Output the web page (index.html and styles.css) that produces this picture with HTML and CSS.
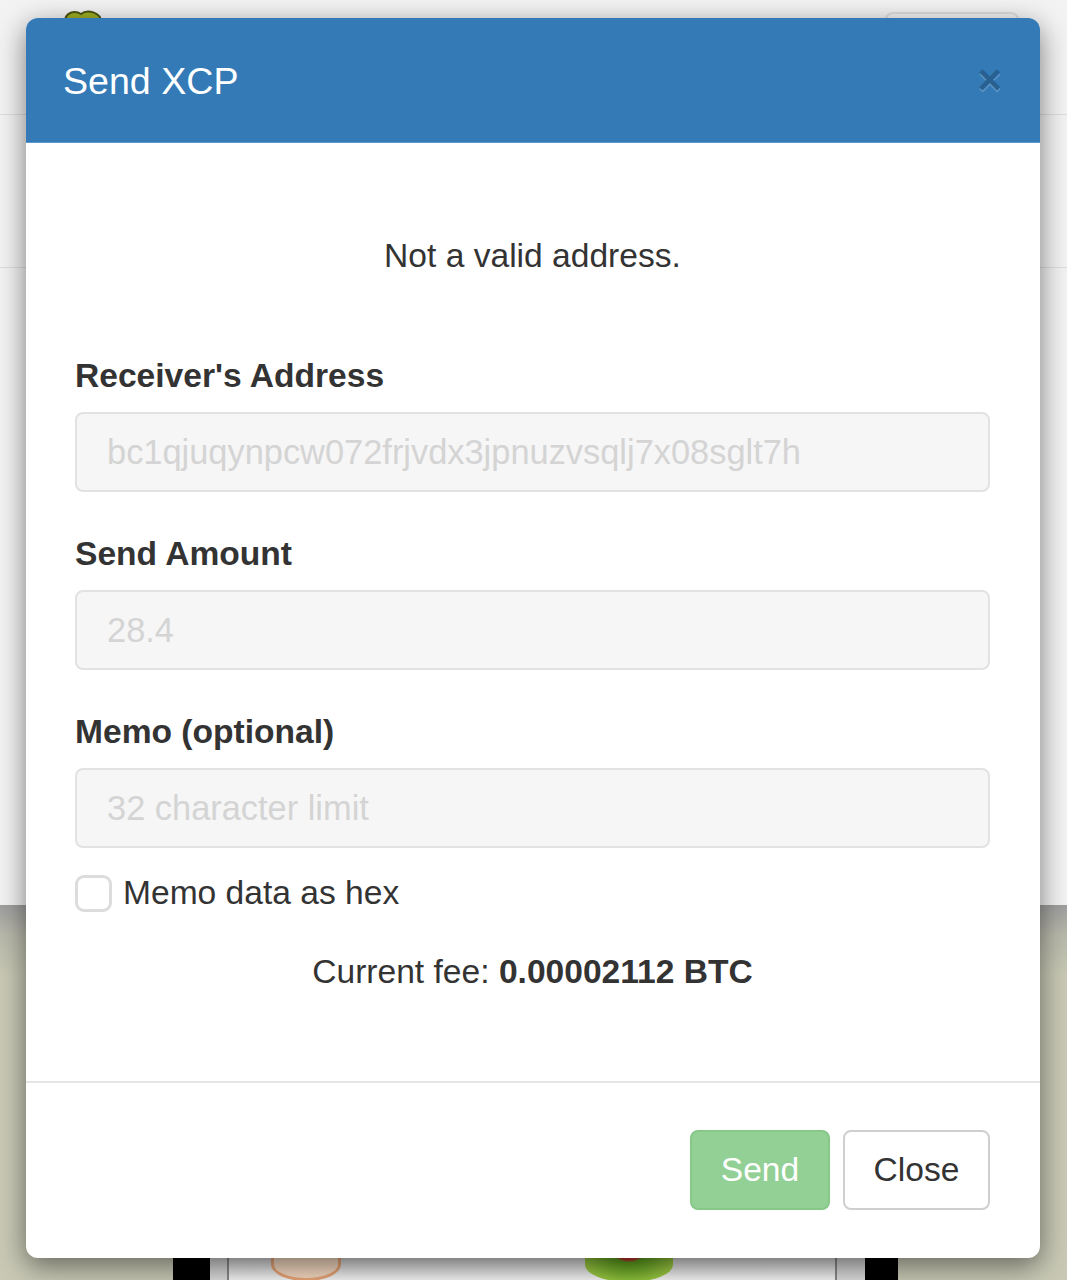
FILE: index.html
```html
<!DOCTYPE html>
<html lang="en">
<head>
    <meta charset="UTF-8">
    <meta name="viewport" content="width=device-width, initial-scale=1.0">
    <title>Send XCP</title>
    <link rel="stylesheet" href="styles.css">
</head>
<body>
    <div class="page">
        <header class="topbar">
            <svg class="logo" width="44" height="40" viewBox="0 0 44 40">
                <path d="M4 14 C4 4 14 2 20 6 C26 1 40 4 40 14 L40 40 L4 40 Z" fill="#9fae24" stroke="#4b5410" stroke-width="2"/>
            </svg>
            <span class="menu-btn"></span>
        </header>
        <div class="subbar"></div>
        <main class="content"></main>
        <section class="gallery">
            <div class="gallery-row">
                <span class="frame"></span>
                <span class="gap"></span>
                <div class="card">
                    <span class="blob orange"></span>
                    <span class="blob green"></span>
                </div>
                <span class="gap narrow"></span>
                <span class="frame right"></span>
            </div>
        </section>
    </div>

    <div class="modal">
        <div class="modal-header">
            <h4 class="modal-title">Send XCP</h4>
            <button class="close" type="button">&times;</button>
        </div>
        <div class="modal-body">
            <p class="message">Not a valid address.</p>

            <div class="field first">
                <label for="address">Receiver's Address</label>
                <input id="address" class="form-control" type="text" value="bc1qjuqynpcw072frjvdx3jpnuzvsqlj7x08sglt7h" disabled>
            </div>

            <div class="field">
                <label for="amount">Send Amount</label>
                <input id="amount" class="form-control" type="text" value="28.4" disabled>
            </div>

            <div class="field">
                <label for="memo">Memo (optional)</label>
                <input id="memo" class="form-control" type="text" placeholder="32 character limit" disabled>
            </div>

            <div class="checkbox">
                <input id="memo-hex" type="checkbox">
                <label for="memo-hex">Memo data as hex</label>
            </div>

            <p class="fee">Current fee: <b>0.00002112 BTC</b></p>
        </div>
        <div class="modal-footer">
            <button class="btn btn-success" type="button" disabled>Send</button>
            <button class="btn btn-default" type="button">Close</button>
        </div>
    </div>
</body>
</html>
```

FILE: styles.css
```css
body {
    margin: 0;
    font-family: "Liberation Sans", Arial, Helvetica, sans-serif;
    color: #333;
    background-color: #f3f3f3;
}
.page {
    height: 1280px;
    overflow: hidden;
}
.topbar {
    height: 114px;
    border-bottom: 1px solid #dedede;
    display: flex;
    justify-content: space-between;
    align-items: flex-start;
    padding: 0 48px 0 61px;
}
.logo {
    margin-top: 8px;
}
.menu-btn {
    margin-top: 12px;
    width: 130px;
    height: 80px;
    border: 2px solid #ddd;
    border-radius: 8px;
}
.subbar {
    height: 152px;
    border-bottom: 1px solid #dedede;
}
.content {
    display: block;
    height: 637px;
}
.gallery {
    height: 375px;
    background: linear-gradient(#9e9e9e, #b9b9ab 30px, #c9c9b6 70px);
    padding-top: 353px;
    box-sizing: border-box;
}
.gallery-row {
    display: flex;
    height: 40px;
    padding-left: 173px;
}
.frame {
    width: 37px;
    background-color: #000;
}
.frame.right {
    width: 33px;
}
.gap {
    width: 17px;
    background: linear-gradient(#cfcfcf, #e6e6e6);
}
.gap.narrow {
    width: 28px;
}
.card {
    position: relative;
    width: 606px;
    border-left: 2px solid #888;
    border-right: 2px solid #888;
    background: linear-gradient(#d0d0d0, #f2f2f2 20px);
}
.blob {
    position: absolute;
    top: -10px;
    border-radius: 0 0 50% 50%;
}
.blob.orange {
    left: 42px;
    width: 64px;
    height: 30px;
    border: 3px solid #e7a477;
    border-top: none;
    background-color: #f4d8c0;
}
.blob.green {
    left: 356px;
    width: 88px;
    height: 34px;
    background: radial-gradient(ellipse at 50% 0, #b8322a 25%, #5c9e1e 30%, #a9d24a 90%);
}

/* modal */
.modal {
    position: absolute;
    top: 18px;
    left: 26px;
    width: 1014px;
    background-color: #fff;
    border-radius: 12px;
    box-shadow: 0 8px 28px rgba(0, 0, 0, 0.5);
    overflow: hidden;
}
.modal-header {
    height: 125px;
    box-sizing: border-box;
    background-color: #337ab7;
    border-bottom: 1px solid #5d96c8;
    display: flex;
    align-items: center;
    justify-content: space-between;
    padding: 4px 38px 0 37px;
}
.modal-title {
    margin: 0;
    color: #fff;
    font-size: 37.6px;
    font-weight: normal;
    line-height: 1;
}
.close {
    padding: 0;
    margin-top: -4px;
    border: none;
    background: none;
    font-family: inherit;
    font-size: 42px;
    font-weight: bold;
    line-height: 1;
    color: #000;
    opacity: 0.2;
    text-shadow: 0 2px 0 #fff;
    cursor: pointer;
}
.modal-body {
    padding: 0 50px 85px 49px;
    font-size: 33.6px;
    line-height: 48px;
}
.message {
    margin: 89px 0 0;
    text-align: center;
}
.field {
    margin-top: 38px;
}
.field.first {
    margin-top: 72px;
}
.field label {
    display: block;
    font-weight: bold;
    margin-bottom: 12px;
}
.form-control {
    display: block;
    width: 100%;
    height: 80px;
    box-sizing: border-box;
    padding: 0 30px;
    font-family: inherit;
    font-size: 34.4px;
    color: #d4d4d4;
    background-color: #f6f6f6;
    border: 2px solid #e2e2e2;
    border-radius: 8px;
}
.form-control::placeholder {
    color: #d4d4d4;
}
.checkbox {
    margin-top: 21px;
    display: flex;
    align-items: center;
}
.checkbox input {
    appearance: none;
    margin: 0 11px 0 0;
    width: 37px;
    height: 37px;
    box-sizing: border-box;
    border: 3px solid #dcdcdc;
    border-radius: 9px;
    background-color: #fff;
}
.fee {
    margin: 31px 0 0;
    text-align: center;
}
.modal-footer {
    border-top: 2px solid #e5e5e5;
    padding: 47px 50px 48px;
    display: flex;
    justify-content: flex-end;
    gap: 13px;
}
.btn {
    height: 80px;
    box-sizing: border-box;
    padding: 0 28px;
    font-family: inherit;
    font-size: 33.6px;
    border-radius: 8px;
    border: 2px solid transparent;
    cursor: pointer;
}
.btn-success {
    width: 140px;
    color: #fff;
    background-color: #93d096;
    border-color: #87c889;
}
.btn-default {
    width: 147px;
    color: #333;
    background-color: #fff;
    border-color: #cfcfcf;
}
```
